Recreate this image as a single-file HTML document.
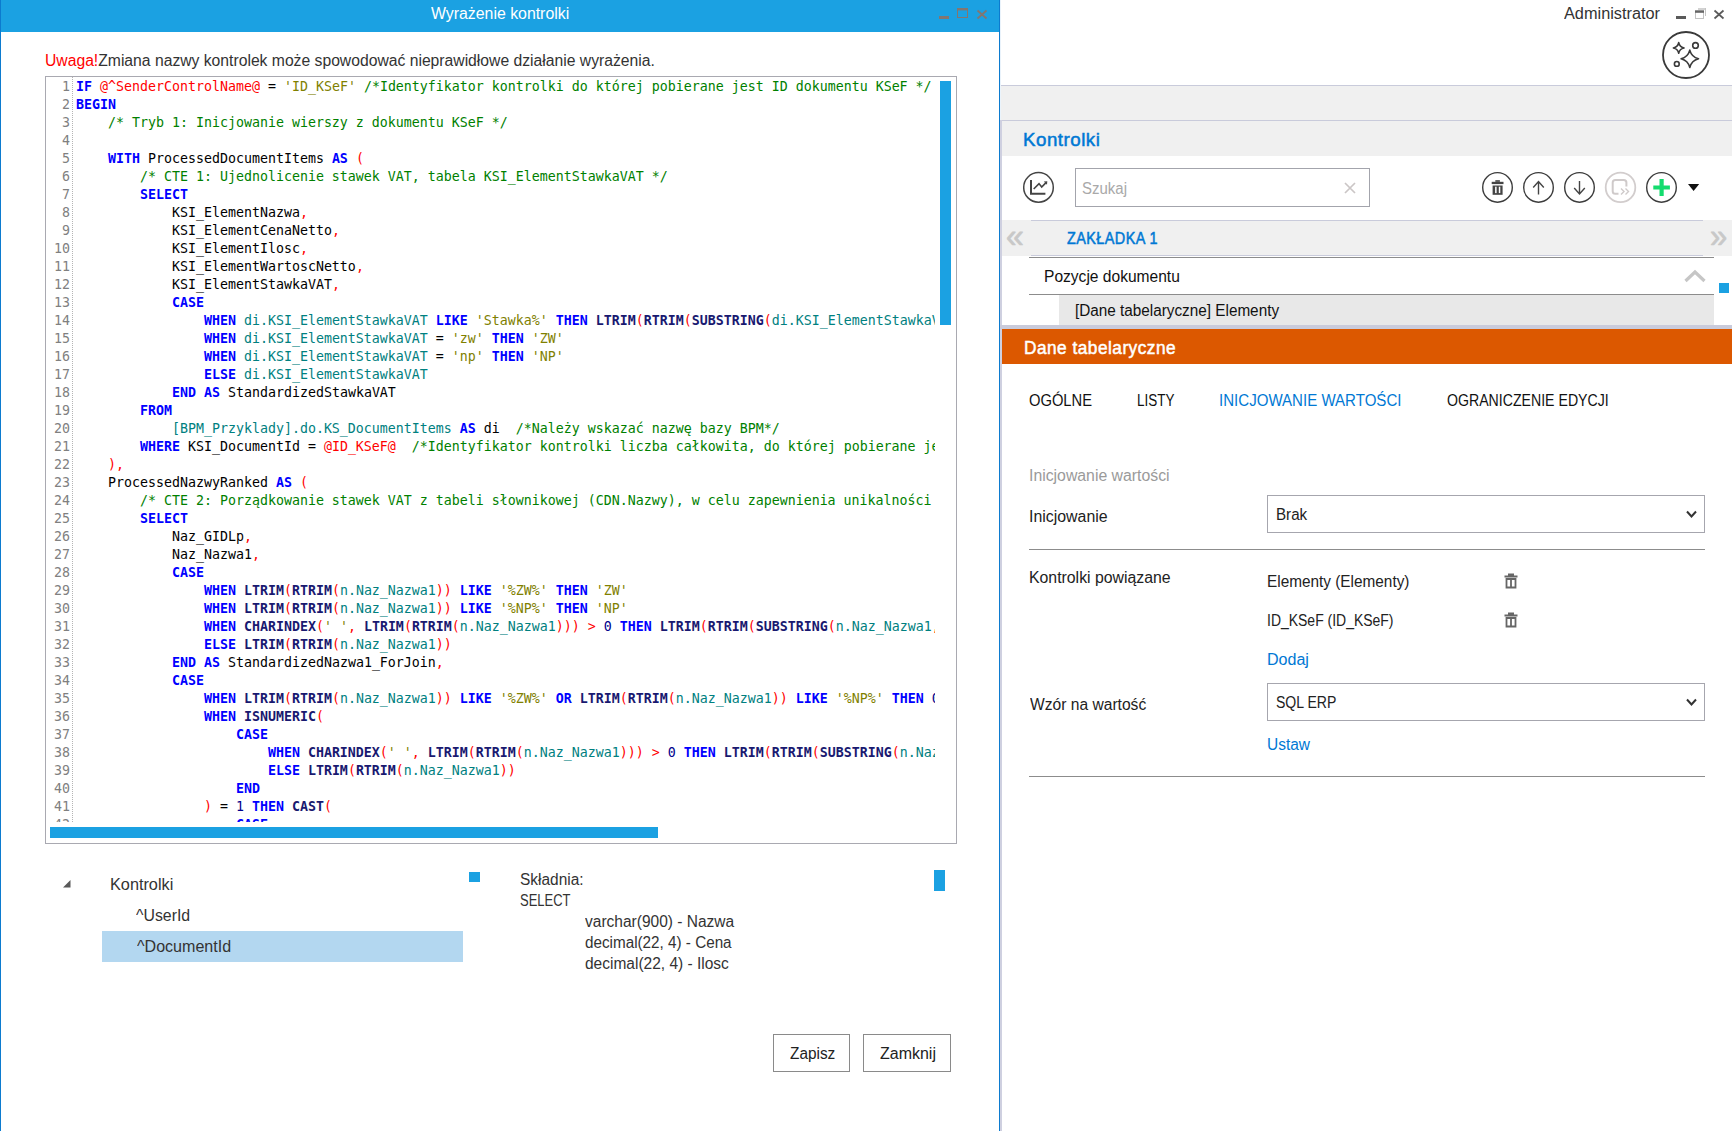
<!DOCTYPE html>
<html lang="pl">
<head>
<meta charset="utf-8">
<title>Wyrażenie kontrolki</title>
<style>
*{box-sizing:border-box;margin:0;padding:0}
html,body{width:1732px;height:1131px;overflow:hidden;background:#fff}
body{position:relative;font-family:"Liberation Sans",sans-serif;font-size:15px;color:#222}
.abs{position:absolute}
.t{position:absolute;white-space:nowrap;line-height:20px}
i{font-style:normal}
/* left dialog */
#dlg{position:absolute;left:0;top:0;width:1001px;height:1131px;background:#fff}
#tbar{position:absolute;left:0;top:0;width:1000px;height:32px;background:#1ba1e2}
#code{position:absolute;left:45px;top:76px;width:912px;height:768px;border:1px solid #a9a9b1;background:#fff;overflow:hidden}
#codev{position:absolute;left:0;top:0;width:889px;height:745px;overflow:hidden;padding-top:1px}
.ln{position:relative;height:18px;line-height:18px;white-space:pre;font-family:"DejaVu Sans Mono","Liberation Mono",monospace;font-size:13.29px;color:#000}
.no{position:absolute;left:0;top:0;width:24px;text-align:right;color:#808080}
.tx{position:absolute;left:30px;top:0}
.k{color:#0000ff;font-weight:bold}
.f{color:#191970;font-weight:bold}
.c{color:#008000}
.s{color:#808000}
.v{color:#ff0000}
.d{color:#008080}
.n{color:#00008b}
#gut{position:absolute;left:26px;top:0;width:0;height:745px;border-left:1px dotted #b4b4b4}
.blue{background:#1ba1e2;position:absolute}
.btn{position:absolute;border:1px solid #8a8a8a;background:#fff;text-align:center;font-size:16px;color:#222;line-height:36px;height:38px}
/* right pane */
#rp{position:absolute;left:1000px;top:0;width:732px;height:1131px;background:#fff}
.ln1{position:absolute;height:1px;background:#c9cbdb}
.hr{position:absolute;height:1px;background:#8c8c8c}
.sel{position:absolute;border:1px solid #a6a6ae;background:#fff;height:38px}
.circ{position:absolute;border:1.5px solid #3a3a3a;border-radius:50%;width:31px;height:31px}
</style>
</head>
<body>
<div id="dlg">
  <div id="tbar"></div>
  <div class="abs" style="left:0;top:0;width:1px;height:1131px;background:#0c7bcf"></div>
  <div class="abs" style="left:999px;top:0;width:1px;height:1131px;background:#0c7bcf"></div>
  <div class="t" id="ttl" style="left:431.25px;top:3.5px;font-size:16px;color:#fff;line-height:20px;transform:scaleX(0.9909);transform-origin:0 50%">Wyrażenie kontrolki</div>
  <!-- window buttons -->
  <svg class="abs" style="left:935px;top:0" width="60" height="32" viewBox="935 0 60 32">
    <rect x="939" y="16" width="10" height="3" fill="#837670"/>
    <rect x="957.500" y="8.500" width="10" height="9" fill="none" stroke="#837670" stroke-width="1"/><rect x="957" y="8" width="11" height="2.400" fill="#837670"/>
    <path d="M977.500 10.500 L986.500 18.500 M986.500 10.500 L977.500 18.500" stroke="#837670" stroke-width="1.700" fill="none"/>
  </svg>
  <div class="t" id="warn" style="left:44.62px;top:50.5px;font-size:16px;color:#333;transform:scaleX(0.9810);transform-origin:0 50%"><span style="color:#ff0000">Uwaga!</span>Zmiana nazwy kontrolek może spowodować nieprawidłowe działanie wyrażenia.</div>
  <div id="code">
    <div id="codev">
<div class="ln"><span class="no">1</span><span class="tx"><b class="k">IF</b> <i class="v">@^SenderControlName@</i> = <i class="s">'ID_KSeF'</i> <i class="c">/*Identyfikator kontrolki do której pobierane jest ID dokumentu KSeF */</i></span></div>
<div class="ln"><span class="no">2</span><span class="tx"><b class="k">BEGIN</b></span></div>
<div class="ln"><span class="no">3</span><span class="tx">    <i class="c">/* Tryb 1: Inicjowanie wierszy z dokumentu KSeF */</i></span></div>
<div class="ln"><span class="no">4</span><span class="tx"></span></div>
<div class="ln"><span class="no">5</span><span class="tx">    <b class="k">WITH</b> ProcessedDocumentItems <b class="k">AS</b> <i class="v">(</i></span></div>
<div class="ln"><span class="no">6</span><span class="tx">        <i class="c">/* CTE 1: Ujednolicenie stawek VAT, tabela KSI_ElementStawkaVAT */</i></span></div>
<div class="ln"><span class="no">7</span><span class="tx">        <b class="k">SELECT</b></span></div>
<div class="ln"><span class="no">8</span><span class="tx">            KSI_ElementNazwa<i class="v">,</i></span></div>
<div class="ln"><span class="no">9</span><span class="tx">            KSI_ElementCenaNetto<i class="v">,</i></span></div>
<div class="ln"><span class="no">10</span><span class="tx">            KSI_ElementIlosc<i class="v">,</i></span></div>
<div class="ln"><span class="no">11</span><span class="tx">            KSI_ElementWartoscNetto<i class="v">,</i></span></div>
<div class="ln"><span class="no">12</span><span class="tx">            KSI_ElementStawkaVAT<i class="v">,</i></span></div>
<div class="ln"><span class="no">13</span><span class="tx">            <b class="k">CASE</b></span></div>
<div class="ln"><span class="no">14</span><span class="tx">                <b class="k">WHEN</b> <i class="d">di.KSI_ElementStawkaVAT</i> <b class="k">LIKE</b> <i class="s">'Stawka%'</i> <b class="k">THEN</b> <b class="f">LTRIM</b><i class="v">(</i><b class="f">RTRIM</b><i class="v">(</i><b class="f">SUBSTRING</b><i class="v">(</i><i class="d">di.KSI_ElementStawkaVAT</i><i class="v">,</i> <i class="n">8</i><i class="v">,</i> <i class="n">10</i><i class="v">)</i><i class="v">)</i><i class="v">)</i></span></div>
<div class="ln"><span class="no">15</span><span class="tx">                <b class="k">WHEN</b> <i class="d">di.KSI_ElementStawkaVAT</i> = <i class="s">'zw'</i> <b class="k">THEN</b> <i class="s">'ZW'</i></span></div>
<div class="ln"><span class="no">16</span><span class="tx">                <b class="k">WHEN</b> <i class="d">di.KSI_ElementStawkaVAT</i> = <i class="s">'np'</i> <b class="k">THEN</b> <i class="s">'NP'</i></span></div>
<div class="ln"><span class="no">17</span><span class="tx">                <b class="k">ELSE</b> <i class="d">di.KSI_ElementStawkaVAT</i></span></div>
<div class="ln"><span class="no">18</span><span class="tx">            <b class="k">END</b> <b class="k">AS</b> StandardizedStawkaVAT</span></div>
<div class="ln"><span class="no">19</span><span class="tx">        <b class="k">FROM</b></span></div>
<div class="ln"><span class="no">20</span><span class="tx">            <i class="d">[BPM_Przyklady].do.KS_DocumentItems</i> <b class="k">AS</b> di  <i class="c">/*Należy wskazać nazwę bazy BPM*/</i></span></div>
<div class="ln"><span class="no">21</span><span class="tx">        <b class="k">WHERE</b> KSI_DocumentId = <i class="v">@ID_KSeF@</i>  <i class="c">/*Identyfikator kontrolki liczba całkowita, do której pobierane jest ID dokumentu */</i></span></div>
<div class="ln"><span class="no">22</span><span class="tx">    <i class="v">)</i><i class="v">,</i></span></div>
<div class="ln"><span class="no">23</span><span class="tx">    ProcessedNazwyRanked <b class="k">AS</b> <i class="v">(</i></span></div>
<div class="ln"><span class="no">24</span><span class="tx">        <i class="c">/* CTE 2: Porządkowanie stawek VAT z tabeli słownikowej (CDN.Nazwy), w celu zapewnienia unikalności i poprawności */</i></span></div>
<div class="ln"><span class="no">25</span><span class="tx">        <b class="k">SELECT</b></span></div>
<div class="ln"><span class="no">26</span><span class="tx">            Naz_GIDLp<i class="v">,</i></span></div>
<div class="ln"><span class="no">27</span><span class="tx">            Naz_Nazwa1<i class="v">,</i></span></div>
<div class="ln"><span class="no">28</span><span class="tx">            <b class="k">CASE</b></span></div>
<div class="ln"><span class="no">29</span><span class="tx">                <b class="k">WHEN</b> <b class="f">LTRIM</b><i class="v">(</i><b class="f">RTRIM</b><i class="v">(</i><i class="d">n.Naz_Nazwa1</i><i class="v">)</i><i class="v">)</i> <b class="k">LIKE</b> <i class="s">'%ZW%'</i> <b class="k">THEN</b> <i class="s">'ZW'</i></span></div>
<div class="ln"><span class="no">30</span><span class="tx">                <b class="k">WHEN</b> <b class="f">LTRIM</b><i class="v">(</i><b class="f">RTRIM</b><i class="v">(</i><i class="d">n.Naz_Nazwa1</i><i class="v">)</i><i class="v">)</i> <b class="k">LIKE</b> <i class="s">'%NP%'</i> <b class="k">THEN</b> <i class="s">'NP'</i></span></div>
<div class="ln"><span class="no">31</span><span class="tx">                <b class="k">WHEN</b> <b class="f">CHARINDEX</b><i class="v">(</i><i class="s">' '</i><i class="v">,</i> <b class="f">LTRIM</b><i class="v">(</i><b class="f">RTRIM</b><i class="v">(</i><i class="d">n.Naz_Nazwa1</i><i class="v">)</i><i class="v">)</i><i class="v">)</i> <i class="v">&gt;</i> <i class="n">0</i> <b class="k">THEN</b> <b class="f">LTRIM</b><i class="v">(</i><b class="f">RTRIM</b><i class="v">(</i><b class="f">SUBSTRING</b><i class="v">(</i><i class="d">n.Naz_Nazwa1</i><i class="v">,</i> <i class="n">1</i><i class="v">,</i> <i class="n">10</i><i class="v">)</i><i class="v">)</i><i class="v">)</i></span></div>
<div class="ln"><span class="no">32</span><span class="tx">                <b class="k">ELSE</b> <b class="f">LTRIM</b><i class="v">(</i><b class="f">RTRIM</b><i class="v">(</i><i class="d">n.Naz_Nazwa1</i><i class="v">)</i><i class="v">)</i></span></div>
<div class="ln"><span class="no">33</span><span class="tx">            <b class="k">END</b> <b class="k">AS</b> StandardizedNazwa1_ForJoin<i class="v">,</i></span></div>
<div class="ln"><span class="no">34</span><span class="tx">            <b class="k">CASE</b></span></div>
<div class="ln"><span class="no">35</span><span class="tx">                <b class="k">WHEN</b> <b class="f">LTRIM</b><i class="v">(</i><b class="f">RTRIM</b><i class="v">(</i><i class="d">n.Naz_Nazwa1</i><i class="v">)</i><i class="v">)</i> <b class="k">LIKE</b> <i class="s">'%ZW%'</i> <b class="k">OR</b> <b class="f">LTRIM</b><i class="v">(</i><b class="f">RTRIM</b><i class="v">(</i><i class="d">n.Naz_Nazwa1</i><i class="v">)</i><i class="v">)</i> <b class="k">LIKE</b> <i class="s">'%NP%'</i> <b class="k">THEN</b> <i class="n">0</i></span></div>
<div class="ln"><span class="no">36</span><span class="tx">                <b class="k">WHEN</b> <b class="f">ISNUMERIC</b><i class="v">(</i></span></div>
<div class="ln"><span class="no">37</span><span class="tx">                    <b class="k">CASE</b></span></div>
<div class="ln"><span class="no">38</span><span class="tx">                        <b class="k">WHEN</b> <b class="f">CHARINDEX</b><i class="v">(</i><i class="s">' '</i><i class="v">,</i> <b class="f">LTRIM</b><i class="v">(</i><b class="f">RTRIM</b><i class="v">(</i><i class="d">n.Naz_Nazwa1</i><i class="v">)</i><i class="v">)</i><i class="v">)</i> <i class="v">&gt;</i> <i class="n">0</i> <b class="k">THEN</b> <b class="f">LTRIM</b><i class="v">(</i><b class="f">RTRIM</b><i class="v">(</i><b class="f">SUBSTRING</b><i class="v">(</i><i class="d">n.Naz_Nazwa1</i><i class="v">,</i> <i class="n">1</i><i class="v">,</i> <i class="n">10</i><i class="v">)</i><i class="v">)</i><i class="v">)</i></span></div>
<div class="ln"><span class="no">39</span><span class="tx">                        <b class="k">ELSE</b> <b class="f">LTRIM</b><i class="v">(</i><b class="f">RTRIM</b><i class="v">(</i><i class="d">n.Naz_Nazwa1</i><i class="v">)</i><i class="v">)</i></span></div>
<div class="ln"><span class="no">40</span><span class="tx">                    <b class="k">END</b></span></div>
<div class="ln"><span class="no">41</span><span class="tx">                <i class="v">)</i> = <i class="n">1</i> <b class="k">THEN</b> <b class="f">CAST</b><i class="v">(</i></span></div>
<div class="ln"><span class="no">42</span><span class="tx">                    <b class="k">CASE</b></span></div>
      <div id="gut"></div>
    </div>
    <div class="blue" style="left:894px;top:4px;width:11px;height:244px"></div>
    <div class="blue" style="left:4px;top:750px;width:608px;height:11px"></div>
  </div>
  <!-- tree -->
  <svg class="abs" style="left:61px;top:878px" width="12" height="12" viewBox="0 0 12 12"><path d="M9.5 2 L9.5 9.5 L2 9.5 Z" fill="#595959"/></svg>
  <div class="t" id="tr0" style="left:110.43px;top:874.5px;font-size:16px;color:#333;transform:scaleX(1.0164);transform-origin:0 50%">Kontrolki</div>
  <div class="t" id="tr1" style="left:136.19px;top:905.5px;font-size:16px;color:#333;transform:scaleX(0.9907);transform-origin:0 50%">^UserId</div>
  <div class="abs" style="left:102px;top:931px;width:361px;height:31px;background:#b3d7f0"></div>
  <div class="t" id="tr2" style="left:136.56px;top:936.5px;font-size:16px;color:#333;transform:scaleX(1.0040);transform-origin:0 50%">^DocumentId</div>
  <div class="blue" style="left:469px;top:872px;width:11px;height:10px"></div>
  <!-- syntax -->
  <div class="t" id="sy0" style="left:520.21px;top:869.0px;font-size:16px;color:#333;line-height:21px;transform:scaleX(0.9651);transform-origin:0 50%">Składnia:</div>
  <div class="t" id="sy1" style="left:520.37px;top:890.0px;font-size:16px;color:#333;line-height:21px;transform:scaleX(0.8109);transform-origin:0 50%">SELECT</div>
  <div class="t" id="sy2" style="left:585.16px;top:911.0px;font-size:16px;color:#333;line-height:21px;transform:scaleX(0.9696);transform-origin:0 50%">varchar(900) - Nazwa</div>
  <div class="t" id="sy3" style="left:584.82px;top:932.0px;font-size:16px;color:#333;line-height:21px;transform:scaleX(0.9529);transform-origin:0 50%">decimal(22, 4) - Cena</div>
  <div class="t" id="sy4" style="left:584.82px;top:953.0px;font-size:16px;color:#333;line-height:21px;transform:scaleX(0.9686);transform-origin:0 50%">decimal(22, 4) - Ilosc</div>
  <div class="blue" style="left:934px;top:870px;width:11px;height:21px"></div>
  <div class="btn" style="left:773px;top:1034px;width:77px"></div>
  <div class="t" id="bt1" style="left:789.74px;top:1043.5px;font-size:16px;color:#222;transform:scaleX(0.9603);transform-origin:0 50%">Zapisz</div>
  <div class="btn" style="left:863px;top:1034px;width:88px"></div>
  <div class="t" id="bt2" style="left:879.93px;top:1043.5px;font-size:16px;color:#222;transform:scaleX(0.9991);transform-origin:0 50%">Zamknij</div>
</div>

<div id="rp">
  <div class="t" id="adm" style="left:564.15px;top:3.5px;font-size:16px;color:#333;transform:scaleX(1.0188);transform-origin:0 50%">Administrator</div>
  <svg class="abs" style="left:670px;top:0" width="60" height="32" viewBox="1670 0 60 32">
    <rect x="1676" y="16" width="10" height="3" fill="#5a5a5a"/>
    <rect x="1698" y="8" width="8" height="2" fill="#d2d2d2"/><rect x="1705" y="8" width="1" height="8" fill="#c4c4c4"/>
    <rect x="1695.500" y="10.500" width="8" height="8" fill="#fff" stroke="#c2c2c2" stroke-width="1"/><rect x="1695" y="10.500" width="9" height="2.300" fill="#666"/>
    <path d="M1714.500 10.500 L1723.500 18.500 M1723.500 10.500 L1714.500 18.500" stroke="#5a5a5a" stroke-width="1.700" fill="none"/>
  </svg>
  <!-- AI button -->
  <svg class="abs" style="left:660px;top:29px" width="52" height="52" viewBox="1660 29 52 52">
    <circle cx="1686" cy="55" r="23" fill="#fff" stroke="#3a3a3a" stroke-width="1.800"/>
    <path d="M1689.8 50.1 Q1691.6 57 1698.5 58.8 Q1691.6 60.6 1689.8 67.5 Q1688 60.6 1681.1 58.8 Q1688 57 1689.8 50.1 Z" fill="none" stroke="#3a3a3a" stroke-width="1.600" stroke-linejoin="round"/>
    <path d="M1678.7 42.5 Q1679.5 47.1 1684.1 47.9 Q1679.5 48.7 1678.7 53.3 Q1677.9 48.7 1673.3 47.9 Q1677.9 47.1 1678.7 42.5 Z" fill="none" stroke="#3a3a3a" stroke-width="1.500" stroke-linejoin="round"/>
    <circle cx="1695.500" cy="45.400" r="2.800" fill="none" stroke="#3a3a3a" stroke-width="1.600"/>
    <circle cx="1676.800" cy="63.900" r="2.400" fill="none" stroke="#3a3a3a" stroke-width="1.600"/>
  </svg>
  <div class="abs" style="left:0;top:85px;width:732px;height:71px;background:#f0f0f0"></div>
  <div class="ln1" style="left:0;top:85px;width:732px"></div>
  <div class="ln1" style="left:0;top:120px;width:732px"></div>
  <div class="abs" style="left:0;top:120px;width:2px;height:1011px;background:#cfd0e0"></div>
  <div class="abs" style="left:0;top:0;width:1px;height:120px;background:#eaf3fb"></div>
  <div class="t" id="hk" style="left:23.39px;top:130.0px;font-size:18px;color:#0078d4;font-weight:normal;-webkit-text-stroke:0.5px currentColor;letter-spacing:0.5px;transform:scaleX(1.0379);transform-origin:0 50%">Kontrolki</div>
  <!-- toolbar -->
  <svg class="abs" style="left:20px;top:169px" width="38" height="38" viewBox="1020 169 38 38">
    <circle cx="1038.500" cy="187.400" r="14.800" fill="#fff" stroke="#444" stroke-width="1.500"/>
    <path d="M1031 180 V193.800 H1045.400" fill="none" stroke="#444" stroke-width="2"/>
    <path d="M1033.700 189 L1039 183.600 L1041.700 187.100 L1046 182.600" fill="none" stroke="#444" stroke-width="1.600"/>
    <path d="M1043.800 181.600 L1047.300 181.300 L1047 184.800 Z" fill="#444"/>
  </svg>
  <div class="abs" style="left:75px;top:168px;width:295px;height:39px;border:1px solid #a3a4ac;background:#fff"></div>
  <div class="t" id="szu" style="left:82.46px;top:178.5px;font-size:16px;color:#a9a9a9;transform:scaleX(0.9363);transform-origin:0 50%">Szukaj</div>
  <svg class="abs" style="left:343px;top:181px" width="14" height="14" viewBox="0 0 14 14"><path d="M2 2 L12 12 M12 2 L2 12" stroke="#cbc6c6" stroke-width="1.7"/></svg>
  <svg class="abs" style="left:478px;top:168px" width="224" height="40" viewBox="1478 168 224 40">
    <g fill="#fff" stroke="#3c3c3c" stroke-width="1.400">
      <circle cx="1497.500" cy="187.400" r="14.800"/><circle cx="1538.500" cy="187.400" r="14.800"/><circle cx="1579.500" cy="187.400" r="14.800"/><circle cx="1620.500" cy="187.400" r="14.800" stroke="#d2cdcd" stroke-width="1.800"/><circle cx="1661.500" cy="187.400" r="14.800"/>
    </g>
    <!-- trash -->
    <rect x="1495.300" y="180.200" width="4.600" height="1.600" fill="#444"/><rect x="1491.700" y="181.800" width="11.800" height="2.300" fill="#444"/>
    <path d="M1492.600 185.500 h10 v9.300 h-10 z" fill="#444"/><rect x="1495.100" y="186.700" width="1.500" height="6.400" fill="#fff"/><rect x="1498.800" y="186.700" width="1.500" height="6.400" fill="#fff"/>
    <!-- up -->
    <path d="M1538.500 194.500 V181.400 M1533.200 187.500 L1538.500 181.500 L1543.800 187.500" stroke="#444" stroke-width="1.400" fill="none"/>
    <!-- down -->
    <path d="M1579.500 181 V194.200 M1574.200 188 L1579.500 194 L1584.800 188" stroke="#444" stroke-width="1.400" fill="none"/>
    <!-- disabled -->
    <path d="M1626.400 186.500 V182.500 q0 -2.600 -2.600 -2.600 H1615.300 q-2.600 0 -2.600 2.600 V191.200 q0 2.600 2.600 2.600 H1618.500" stroke="#cfcaca" stroke-width="2" fill="none"/>
    <path d="M1621 188.400 l3 3 l-3 3 M1625.500 188.400 l3 3 l-3 3" stroke="#cfcaca" stroke-width="1.400" fill="none"/>
    <!-- plus -->
    <path d="M1661.600 178.900 V195.900 M1653.300 187.500 H1669.900" stroke="#14dc6e" stroke-width="4.200" fill="none"/>
    <path d="M1688 184 H1699.200 L1693.600 191 Z" fill="#111"/>
  </svg>
  <!-- tab strip -->
  <div class="abs" style="left:2px;top:220px;width:730px;height:36px;background:#f0f0f0"></div>
  <div class="ln1" style="left:31px;top:220px;width:672px"></div>
  <div class="ln1" style="left:31px;top:255px;width:672px"></div>
  <div class="t" id="lq" style="left:6.24px;top:223.0px;font-size:34px;color:#c8c8c8;line-height:24px;-webkit-text-stroke:0.7px #c8c8c8;transform:scaleX(0.9412);transform-origin:0 50%">«</div>
  <div class="t" id="rq" style="left:709.97px;top:223.0px;font-size:34px;color:#c8c8c8;line-height:24px;-webkit-text-stroke:0.7px #c8c8c8;transform:scaleX(0.9097);transform-origin:0 50%">»</div>
  <div class="t" id="zk" style="left:67.42px;top:228.5px;font-size:16px;color:#0078d4;font-weight:normal;-webkit-text-stroke:0.5px currentColor;letter-spacing:0.5px;transform:scaleX(0.9000);transform-origin:0 50%">ZAKŁADKA 1</div>
  <div class="hr" style="left:29px;top:257px;width:685px"></div>
  <div class="t" id="pd" style="left:43.91px;top:266.5px;font-size:16px;color:#111;transform:scaleX(0.9728);transform-origin:0 50%">Pozycje dokumentu</div>
  <svg class="abs" style="left:684px;top:268px" width="22" height="17" viewBox="0 0 22 17"><path d="M1.500 13 L11 4 L20.500 13" stroke="#c6c6c6" stroke-width="3.2" fill="none"/></svg>
  <div class="blue" style="left:719px;top:283px;width:10px;height:10px"></div>
  <div class="hr" style="left:29px;top:294px;width:685px"></div>
  <div class="abs" style="left:59px;top:295px;width:655px;height:30px;background:#e8e8e8"></div>
  <div class="t" id="de" style="left:75.06px;top:300.5px;font-size:16px;color:#111;transform:scaleX(0.9559);transform-origin:0 50%">[Dane tabelaryczne] Elementy</div>
  <div class="abs" style="left:0;top:325px;width:732px;height:4px;background:#c9cbdb"></div>
  <div class="abs" style="left:2px;top:329px;width:730px;height:35px;background:#dc5800"></div>
  <div class="t" id="dt" style="left:24.01px;top:338.0px;font-size:18px;color:#fff;font-weight:normal;-webkit-text-stroke:0.5px currentColor;letter-spacing:0.5px;transform:scaleX(0.9591);transform-origin:0 50%">Dane tabelaryczne</div>
  <!-- tabs -->
  <div class="t" id="tb1" style="left:28.50px;top:390.5px;font-size:16px;color:#111;transform:scaleX(0.9205);transform-origin:0 50%">OGÓLNE</div>
  <div class="t" id="tb2" style="left:137.07px;top:390.5px;font-size:16px;color:#111;transform:scaleX(0.8421);transform-origin:0 50%">LISTY</div>
  <div class="t" id="tb3" style="left:219.30px;top:390.5px;font-size:16px;color:#0078d4;transform:scaleX(0.9416);transform-origin:0 50%">INICJOWANIE WARTOŚCI</div>
  <div class="t" id="tb4" style="left:447.16px;top:390.5px;font-size:16px;color:#111;transform:scaleX(0.8830);transform-origin:0 50%">OGRANICZENIE EDYCJI</div>
  <!-- form -->
  <div class="t" id="f0" style="left:28.78px;top:465.5px;font-size:16px;color:#9a9a9a;transform:scaleX(0.9878);transform-origin:0 50%">Inicjowanie wartości</div>
  <div class="t" id="f1" style="left:28.77px;top:506.5px;font-size:16px;color:#222;transform:scaleX(0.9932);transform-origin:0 50%">Inicjowanie</div>
  <div class="sel" style="left:267px;top:495px;width:438px"></div>
  <div class="t" id="s1" style="left:275.95px;top:504.5px;font-size:16px;color:#222;transform:scaleX(0.9474);transform-origin:0 50%">Brak</div>
  <svg class="abs" style="left:685px;top:509px" width="13" height="11" viewBox="0 0 13 11"><path d="M2 2.500 L6.500 7.500 L11 2.500" stroke="#333" stroke-width="2" fill="none"/></svg>
  <div class="hr" style="left:29px;top:549px;width:676px"></div>
  <div class="t" id="f2" style="left:28.90px;top:567.5px;font-size:16px;color:#222;transform:scaleX(0.9890);transform-origin:0 50%">Kontrolki powiązane</div>
  <div class="t" id="f3" style="left:267.13px;top:571.5px;font-size:16px;color:#222;transform:scaleX(0.9593);transform-origin:0 50%">Elementy (Elementy)</div>
  <div class="t" id="f4" style="left:267.13px;top:610.5px;font-size:16px;color:#222;transform:scaleX(0.8729);transform-origin:0 50%">ID_KSeF (ID_KSeF)</div>
  <svg class="abs" style="left:503px;top:572px" width="16" height="18" viewBox="0 0 16 18"><path d="M1.500 4.500 h13 M5 2.500 h6" stroke="#666" stroke-width="1.800" fill="none"/><path d="M3.500 7 v8.500 h9 v-8.500 z M8 7 v8.500" stroke="#666" stroke-width="1.800" fill="none"/></svg>
  <svg class="abs" style="left:503px;top:611px" width="16" height="18" viewBox="0 0 16 18"><path d="M1.500 4.500 h13 M5 2.500 h6" stroke="#666" stroke-width="1.800" fill="none"/><path d="M3.500 7 v8.500 h9 v-8.500 z M8 7 v8.500" stroke="#666" stroke-width="1.800" fill="none"/></svg>
  <div class="t" id="f5" style="left:266.94px;top:649.5px;font-size:16px;color:#0078d4;transform:scaleX(1.0030);transform-origin:0 50%">Dodaj</div>
  <div class="t" id="f6" style="left:29.98px;top:694.5px;font-size:16px;color:#222;transform:scaleX(0.9753);transform-origin:0 50%">Wzór na wartość</div>
  <div class="sel" style="left:267px;top:683px;width:438px"></div>
  <div class="t" id="s2" style="left:276.30px;top:692.5px;font-size:16px;color:#222;transform:scaleX(0.8780);transform-origin:0 50%">SQL ERP</div>
  <svg class="abs" style="left:685px;top:697px" width="13" height="11" viewBox="0 0 13 11"><path d="M2 2.500 L6.500 7.500 L11 2.500" stroke="#333" stroke-width="2" fill="none"/></svg>
  <div class="t" id="f7" style="left:267.05px;top:734.5px;font-size:16px;color:#0078d4;transform:scaleX(0.9672);transform-origin:0 50%">Ustaw</div>
  <div class="hr" style="left:29px;top:776px;width:676px"></div>
</div>
</body>
</html>
